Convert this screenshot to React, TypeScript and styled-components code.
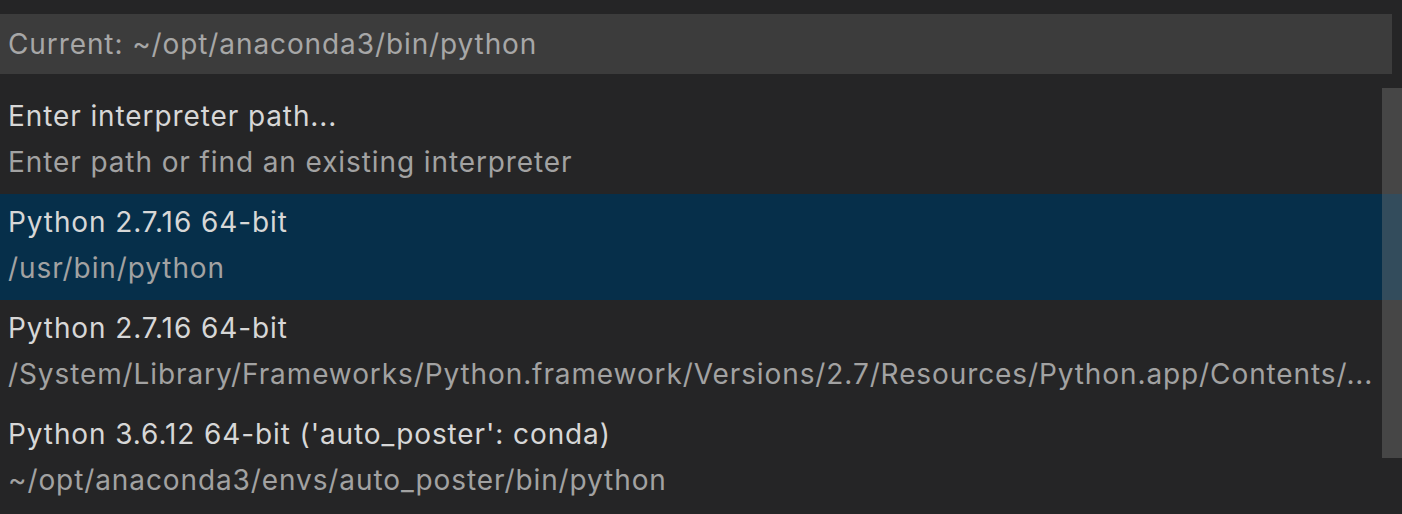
import React from "react";
import styled, { createGlobalStyle } from "styled-components";

const Global = createGlobalStyle`
  html, body {
    margin: 0;
    padding: 0;
    background: #252526;
  }
  body {
    font-family: Inter, "Noto Sans", sans-serif;
    -webkit-font-smoothing: antialiased;
  }
`;

const Widget = styled.div`
  width: 1402px;
  height: 514px;
  background: #252526;
  display: flex;
  flex-direction: column;
  padding-top: 14px;
  box-sizing: border-box;
  overflow: hidden;
`;

const InputBox = styled.div`
  height: 60px;
  margin-right: 10px;
  background: #3c3c3c;
  display: flex;
  align-items: center;
  padding-left: 8px;
  font-size: 28px;
  letter-spacing: 0.9px;
  color: #a7a7a7;
`;

const ListArea = styled.div`
  position: relative;
  margin-top: 14px;
  display: flex;
  flex-direction: column;
`;

const Row = styled.div<{ $selected?: boolean }>`
  height: 106px;
  box-sizing: border-box;
  padding: 5px 24px 9px 8px;
  background: ${(p) => (p.$selected ? "#062f4a" : "transparent")};
  display: flex;
  flex-direction: column;
`;

const Label = styled.div`
  font-size: 28px;
  letter-spacing: 0.9px;
  line-height: 46px;
  color: #d7d7d7;
  white-space: nowrap;
`;

const Detail = styled.div`
  font-size: 28px;
  letter-spacing: 0.9px;
  line-height: 46px;
  color: #a2a2a2;
  white-space: nowrap;
  overflow: hidden;
  text-overflow: ellipsis;
`;

const Scrollbar = styled.div`
  position: absolute;
  top: 0;
  right: 0;
  width: 20px;
  height: 370px;
  background: rgba(121, 121, 121, 0.4);
`;

const items = [
  {
    label: "Enter interpreter path...",
    detail: "Enter path or find an existing interpreter",
  },
  { label: "Python 2.7.16 64-bit", detail: "/usr/bin/python", selected: true },
  {
    label: "Python 2.7.16 64-bit",
    detail:
      "/System/Library/Frameworks/Python.framework/Versions/2.7/Resources/Python.app/Contents/...",
  },
  {
    label: "Python 3.6.12 64-bit ('auto_poster': conda)",
    detail: "~/opt/anaconda3/envs/auto_poster/bin/python",
  },
];

export default function App() {
  return (
    <>
      <Global />
      <Widget>
        <InputBox>Current: ~/opt/anaconda3/bin/python</InputBox>
        <ListArea>
          {items.map((it, i) => (
            <Row key={i} $selected={it.selected}>
              <Label>{it.label}</Label>
              <Detail>{it.detail}</Detail>
            </Row>
          ))}
          <Scrollbar />
        </ListArea>
      </Widget>
    </>
  );
}
